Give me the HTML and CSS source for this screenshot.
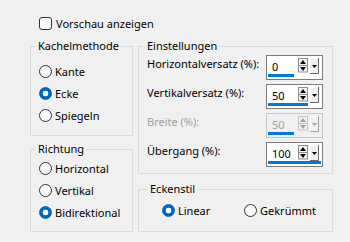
FILE: index.html
```html
<!DOCTYPE html>
<html lang="de">
<head>
  <meta charset="UTF-8" />
  <title>Kacheln</title>
  <link rel="stylesheet" href="styles.css">
</head>
<body>
  <div class="dialog">
    <div class="check"><span class="box"></span>Vorschau anzeigen</div>

    <div class="columns">
      <div class="col left">
        <fieldset class="group tiling">
          <legend>Kachelmethode</legend>
          <div class="radio"><span class="dot"></span>Kante</div>
          <div class="radio"><span class="dot on"></span>Ecke</div>
          <div class="radio"><span class="dot"></span>Spiegeln</div>
        </fieldset>
        <fieldset class="group direction">
          <legend>Richtung</legend>
          <div class="radio"><span class="dot"></span>Horizontal</div>
          <div class="radio"><span class="dot"></span>Vertikal</div>
          <div class="radio"><span class="dot on"></span>Bidirektional</div>
        </fieldset>
      </div>

      <div class="col right">
        <fieldset class="group settings">
          <legend>Einstellungen</legend>
          <div class="field">
            <span class="label">Horizontalversatz (%):</span>
            <div class="spin">
              <div class="spin-top">
                <span class="value">0</span>
                <svg class="arrows" width="10" height="15" viewBox="0 0 10 15"><rect x="0.5" y="0.5" width="9" height="7" fill="#f4f4f4" stroke="#8c8c8c"/><rect x="0.5" y="7.5" width="9" height="6.5" fill="#f4f4f4" stroke="#8c8c8c"/><path d="M5 2 L8 6 L2 6 Z" fill="#000"/><path d="M2 9 L8 9 L5 13 Z" fill="#000"/></svg>
                <svg class="drop" width="9" height="16" viewBox="0 0 9 16"><rect width="9" height="16" fill="#f0f0f0"/><path d="M0.5 15 V0.5 H8" stroke="#fff" fill="none"/><path d="M8.5 0 V15.5 H0" stroke="#696969" fill="none"/><path d="M2 7 L7 7 L4.5 10 Z" fill="#000"/></svg>
              </div>
              <span class="bar" style="width:26px"></span>
            </div>
          </div>
          <div class="field">
            <span class="label">Vertikalversatz (%):</span>
            <div class="spin">
              <div class="spin-top">
                <span class="value">50</span>
                <svg class="arrows" width="10" height="15" viewBox="0 0 10 15"><rect x="0.5" y="0.5" width="9" height="7" fill="#f4f4f4" stroke="#8c8c8c"/><rect x="0.5" y="7.5" width="9" height="6.5" fill="#f4f4f4" stroke="#8c8c8c"/><path d="M5 2 L8 6 L2 6 Z" fill="#000"/><path d="M2 9 L8 9 L5 13 Z" fill="#000"/></svg>
                <svg class="drop" width="9" height="16" viewBox="0 0 9 16"><rect width="9" height="16" fill="#f0f0f0"/><path d="M0.5 15 V0.5 H8" stroke="#fff" fill="none"/><path d="M8.5 0 V15.5 H0" stroke="#696969" fill="none"/><path d="M2 7 L7 7 L4.5 10 Z" fill="#000"/></svg>
              </div>
              <span class="bar" style="width:40px"></span>
            </div>
          </div>
          <div class="field disabled">
            <span class="label">Breite (%):</span>
            <div class="spin">
              <div class="spin-top">
                <span class="value">50</span>
                <svg class="arrows" width="10" height="15" viewBox="0 0 10 15"><rect x="0.5" y="0.5" width="9" height="7" fill="#f0f0f0" stroke="#c4c4c4"/><rect x="0.5" y="7.5" width="9" height="6.5" fill="#f0f0f0" stroke="#c4c4c4"/><path d="M5 2 L8 6 L2 6 Z" fill="#a0a0a0"/><path d="M2 9 L8 9 L5 13 Z" fill="#a0a0a0"/></svg>
                <svg class="drop" width="9" height="16" viewBox="0 0 9 16"><rect width="9" height="16" fill="#f0f0f0"/><path d="M0.5 15 V0.5 H8" stroke="#fff" fill="none"/><path d="M8.5 0 V15.5 H0" stroke="#a0a0a0" fill="none"/><path d="M2 7 L7 7 L4.5 10 Z" fill="#a0a0a0"/></svg>
              </div>
              <span class="bar" style="width:26px"></span>
            </div>
          </div>
          <div class="field">
            <span class="label">Übergang (%):</span>
            <div class="spin">
              <div class="spin-top">
                <span class="value">100</span>
                <svg class="arrows" width="10" height="15" viewBox="0 0 10 15"><rect x="0.5" y="0.5" width="9" height="7" fill="#f4f4f4" stroke="#8c8c8c"/><rect x="0.5" y="7.5" width="9" height="6.5" fill="#f4f4f4" stroke="#8c8c8c"/><path d="M5 2 L8 6 L2 6 Z" fill="#000"/><path d="M2 9 L8 9 L5 13 Z" fill="#000"/></svg>
                <svg class="drop" width="9" height="16" viewBox="0 0 9 16"><rect width="9" height="16" fill="#f0f0f0"/><path d="M0.5 15 V0.5 H8" stroke="#fff" fill="none"/><path d="M8.5 0 V15.5 H0" stroke="#696969" fill="none"/><path d="M2 7 L7 7 L4.5 10 Z" fill="#000"/></svg>
              </div>
              <span class="bar" style="width:53px"></span>
            </div>
          </div>
        </fieldset>

        <fieldset class="group corner">
          <legend>Eckenstil</legend>
          <div class="radio"><span class="dot on"></span>Linear</div>
          <div class="radio"><span class="dot"></span>Gekrümmt</div>
        </fieldset>
      </div>
    </div>
  </div>
</body>
</html>
```

FILE: styles.css
```css
body {
  margin: 0;
  background: #f0f0f0;
  font-family: "Noto Sans", sans-serif;
  font-size: 11px;
  color: #000;
}
.dialog {
  width: 350px;
  height: 242px;
  box-sizing: border-box;
  padding: 17px 0 0 30px;
}
.check {
  display: flex;
  align-items: center;
  gap: 4px;
  height: 13px;
  margin-left: 9px;
}
.box {
  width: 11px;
  height: 11px;
  border: 1px solid #333;
  border-radius: 3px;
  background: #f8f8f8;
}
.columns {
  display: flex;
  gap: 5px;
  margin-top: 8px;
}
.col {
  display: flex;
  flex-direction: column;
}
.left { width: 103px; gap: 5px; }
.right { width: 195px; gap: 7px; }

.group {
  margin: 0;
  min-width: 0;
  border: 1px solid #dcdcdc;
  padding: 0 8px;
}
.group legend {
  padding: 0 2px;
  margin-left: -3px;
  line-height: 16px;
}
.radio {
  display: flex;
  align-items: center;
  gap: 3px;
  height: 22px;
}
.dot {
  width: 11px;
  height: 11px;
  border: 1px solid #333;
  border-radius: 50%;
  background: #f8f8f8;
}
.dot.on {
  border-color: #0067c0;
  background: radial-gradient(circle, #fff 0 2.6px, #0067c0 3.2px);
}
.tiling { padding-top: 6px; padding-bottom: 9px; }
.direction { padding-bottom: 8px; }

.settings { padding: 1px 9px 6px 8px; display: flex; flex-direction: column; gap: 4px; }
.settings legend { margin-left: -2px; }
.field {
  display: flex;
  justify-content: space-between;
  align-items: flex-start;
}
.label {
  line-height: 16px;
  padding-top: 1px;
  white-space: nowrap;
}
.spin {
  width: 57px;
  height: 25px;
  box-sizing: border-box;
  border: 1px solid #7a7a7a;
  background: #fff;
  display: flex;
  flex-direction: column;
}
.spin-top {
  display: flex;
  height: 18px;
}
.value {
  flex: 1;
  padding: 3px 0 0 5px;
  line-height: 16px;
}
.arrows { margin-top: 2px; }
.drop { margin: 2px 3px 0 2px; }
.bar {
  height: 3px;
  margin-left: 1px;
  background: #0078d7;
}
.disabled .label,
.disabled .value { color: #a0a0a0; }
.disabled .spin {
  border-color: #c8c8c8;
  background: #f0f0f0;
}

.corner {
  padding: 2px 8px 10px 23px;
  display: grid;
  grid-template-columns: 82px auto;
}
.corner legend { margin-left: -14px; }
```
